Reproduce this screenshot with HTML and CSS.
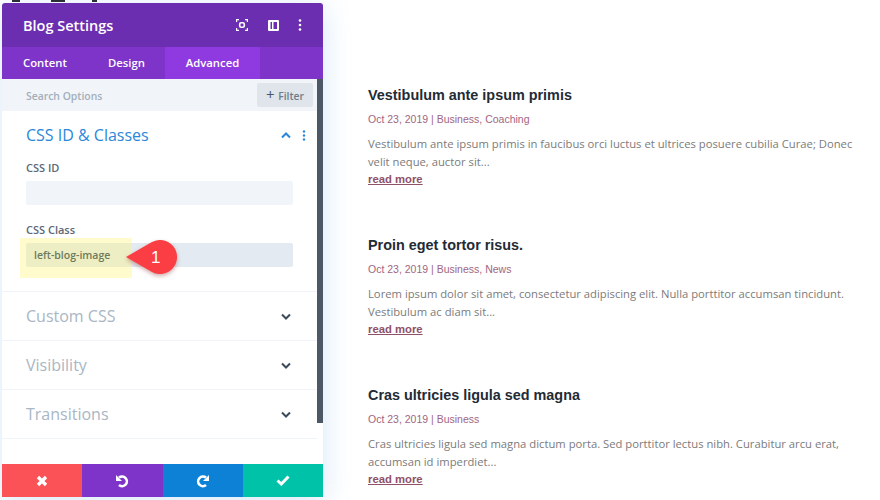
FILE: index.html
```html
<!DOCTYPE html>
<html lang="en">
<head>
    <meta charset="UTF-8">
    <title>Blog Settings</title>
    <link rel="stylesheet" href="styles.css">
</head>
<body>
    <div class="page">
        <!-- settings modal -->
        <div class="panel-col">
            <!-- bottom of the page heading, hidden by the modal -->
            <div class="heading-peek">
                <span class="peek-a"></span>
                <span class="peek-b"></span>
                <span class="peek-c"></span>
            </div>
            <div class="panel">
                <div class="panel-head">
                    <span class="panel-title">Blog Settings</span>
                    <div class="head-icons">
                        <svg width="12" height="12" viewBox="0 0 12 12" fill="none" stroke="#fff" stroke-width="1.2"><path d="M.6 3V.6H3M9 .6h2.400V3M11.400 9v2.400H9M3 11.400H.6V9"/><rect x="3.700" y="3.700" width="4.600" height="4.600" rx="1.500" stroke-width="1.600"/></svg>
                        <svg width="11" height="11" viewBox="0 0 11 11"><path fill="#fff" fill-rule="evenodd" d="M1 0h9a1 1 0 0 1 1 1v9a1 1 0 0 1-1 1H1a1 1 0 0 1-1-1V1a1 1 0 0 1 1-1zm1.500 2v7H4V2zm3 0v7h3.500V2z"/></svg>
                        <svg width="4" height="12" viewBox="0 0 4 12" fill="#fff"><circle cx="2" cy="1.500" r="1.300"/><circle cx="2" cy="6" r="1.300"/><circle cx="2" cy="10.500" r="1.300"/></svg>
                    </div>
                </div>
                <div class="tabs">
                    <span class="tab tab-content">Content</span>
                    <span class="tab tab-design">Design</span>
                    <span class="tab tab-advanced">Advanced</span>
                </div>
                <div class="panel-body">
                    <div class="scrollbar"></div>
                    <div class="search-row">
                        <span class="search-text">Search Options</span>
                        <span class="filter-btn"><span class="plus">+</span> Filter</span>
                    </div>
                    <div class="section section-open">
                        <div class="section-head">
                            <span class="section-title blue">CSS ID &amp; Classes</span>
                            <div class="section-icons">
                                <svg width="10" height="7" viewBox="0 0 10 7" fill="none" stroke="#2b87da" stroke-width="2"><path d="M1 5.500l4-4 4 4"/></svg>
                                <svg width="4" height="11" viewBox="0 0 4 11" fill="#2b87da"><circle cx="2" cy="1.500" r="1.200"/><circle cx="2" cy="5.500" r="1.200"/><circle cx="2" cy="9.500" r="1.200"/></svg>
                            </div>
                        </div>
                        <label class="field-label first">CSS ID</label>
                        <div class="field"></div>
                        <label class="field-label second">CSS Class</label>
                        <div class="field field-filled">
                            <span class="highlight"></span>
                            <span class="field-value">left-blog-image</span>
                            <svg class="callout" width="56" height="44" viewBox="0 0 56 44">
                                <path fill="#fb3e44" d="M2 21L27.500 6.300A17 17 0 1 1 27.500 35.700z"/>
                            </svg>
                            <span class="callout-num">1</span>
                        </div>
                    </div>
                    <div class="section">
                        <span class="section-title">Custom CSS</span>
                        <svg class="chevron" width="10" height="7" viewBox="0 0 10 7" fill="none" stroke="#3d4a5c" stroke-width="2"><path d="M1 1.500l4 4 4-4"/></svg>
                    </div>
                    <div class="section">
                        <span class="section-title">Visibility</span>
                        <svg class="chevron" width="10" height="7" viewBox="0 0 10 7" fill="none" stroke="#3d4a5c" stroke-width="2"><path d="M1 1.500l4 4 4-4"/></svg>
                    </div>
                    <div class="section">
                        <span class="section-title">Transitions</span>
                        <svg class="chevron" width="10" height="7" viewBox="0 0 10 7" fill="none" stroke="#3d4a5c" stroke-width="2"><path d="M1 1.500l4 4 4-4"/></svg>
                    </div>
                </div>
                <div class="actions">
                    <div class="action red">
                        <svg width="12" height="12" viewBox="0 0 12 12" fill="none" stroke="#fff" stroke-width="3.400"><path d="M2 2l8 8M10 2l-8 8"/></svg>
                    </div>
                    <div class="action purple">
                        <svg width="14" height="14" viewBox="0 0 14 14" fill="none" stroke="#fff" stroke-width="2.600"><path d="M4 3.600A4.800 4.800 0 1 1 4 11"/><path fill="#fff" stroke="none" d="M1 1v6h6z"/></svg>
                    </div>
                    <div class="action blue-bg">
                        <svg width="14" height="14" viewBox="0 0 14 14" fill="none" stroke="#fff" stroke-width="2.600"><path d="M10 3.600A4.800 4.800 0 1 0 10 11"/><path fill="#fff" stroke="none" d="M13 1v6H7z"/></svg>
                    </div>
                    <div class="action green">
                        <svg width="14" height="11" viewBox="0 0 14 11" fill="none" stroke="#fff" stroke-width="3"><path d="M1.500 5.500l3.800 3.500 7.200-7.500"/></svg>
                    </div>
                </div>
            </div>
        </div>

        <!-- blog list -->
        <div class="posts">
            <div class="post">
                <h2 class="post-title">Vestibulum ante ipsum primis</h2>
                <div class="post-meta">Oct 23, 2019 | Business, Coaching</div>
                <p class="post-text">Vestibulum ante ipsum primis in faucibus orci luctus et ultrices posuere cubilia Curae; Donec velit neque, auctor sit...</p>
                <a class="read-more" href="#">read more</a>
            </div>
            <div class="post">
                <h2 class="post-title">Proin eget tortor risus.</h2>
                <div class="post-meta">Oct 23, 2019 | Business, News</div>
                <p class="post-text">Lorem ipsum dolor sit amet, consectetur adipiscing elit. Nulla porttitor accumsan tincidunt. Vestibulum ac diam sit...</p>
                <a class="read-more" href="#">read more</a>
            </div>
            <div class="post">
                <h2 class="post-title">Cras ultricies ligula sed magna</h2>
                <div class="post-meta">Oct 23, 2019 | Business</div>
                <p class="post-text">Cras ultricies ligula sed magna dictum porta. Sed porttitor lectus nibh. Curabitur arcu erat, accumsan id imperdiet...</p>
                <a class="read-more" href="#">read more</a>
            </div>
        </div>
    </div>
</body>
</html>
```

FILE: styles.css
```css
html, body {
    margin: 0;
    height: 100%;
    overflow: hidden;
    background-color: #fff;
}

.page {
    display: flex;
    height: 500px;
    font-family: "Open Sans", sans-serif;
}

.panel-col {
    width: 321px;
    margin-left: 2px;
    flex-shrink: 0;
}

.heading-peek {
    display: flex;
    height: 3px;
}

.heading-peek span {
    height: 2px;
    background-color: #2a2f38;
}

.peek-a {
    width: 8px;
    margin-left: 10px;
}

.peek-b {
    width: 14px;
    margin-left: 31px;
}

.peek-c {
    width: 5px;
    margin-left: 27px;
}

.panel {
    display: flex;
    flex-direction: column;
    height: 494px;
    background-color: #fff;
    border-radius: 3px;
    box-shadow: 0 5px 30px rgba(43, 135, 218, 0.2);
}

.panel-head {
    display: flex;
    align-items: center;
    justify-content: space-between;
    height: 44px;
    padding: 0 21px;
    background-color: #6c2eb1;
    border-radius: 3px 3px 0 0;
}

.panel-title {
    font-size: 14.500px;
    font-weight: 600;
    color: #fff;
}

.head-icons {
    display: flex;
    align-items: center;
    gap: 19px;
}

.head-icons svg:first-child {
    margin-right: 1px;
}

.tabs {
    display: flex;
    height: 32px;
    background-color: #7e34c9;
}

.tab {
    font-size: 11.300px;
    font-weight: 600;
    line-height: 32px;
    color: #fff;
}

.tab-content {
    width: 87px;
    padding-left: 21px;
    box-sizing: border-box;
}

.tab-design {
    width: 76px;
    padding-left: 19px;
    box-sizing: border-box;
}

.tab-advanced {
    width: 95px;
    text-align: center;
    background-color: #8f3ae0;
}

.panel-body {
    position: relative;
    flex: 1;
    padding-right: 6px;
}

.scrollbar {
    position: absolute;
    top: 0;
    right: 0;
    width: 6px;
    height: 344px;
    background-color: #4c5866;
}

.search-row {
    display: flex;
    align-items: center;
    justify-content: space-between;
    height: 32px;
    padding: 0 4px 0 24px;
    background-color: #f1f5f9;
}

.search-text {
    padding-top: 2px;
    font-size: 10.400px;
    font-weight: 600;
    color: #a3aebb;
}

.filter-btn {
    width: 56px;
    height: 24px;
    font-size: 10.400px;
    font-weight: 600;
    line-height: 26px;
    text-align: center;
    color: #6f7b89;
    background-color: #dfe5ea;
    border-radius: 2px;
}

.plus {
    margin-right: 1px;
    font-size: 15px;
    font-weight: 400;
    line-height: 14px;
    color: #4c5866;
}

.section {
    display: flex;
    align-items: center;
    justify-content: space-between;
    height: 48px;
    padding: 0 26px 0 24px;
    border-bottom: 1px solid #f1f5f9;
}

.section-open {
    display: block;
    height: 180px;
    padding: 0;
}

.section-head {
    display: flex;
    align-items: center;
    justify-content: space-between;
    height: 48px;
    padding: 0 11px 0 24px;
}

.section-icons {
    display: flex;
    align-items: center;
    gap: 11px;
}

.section-title {
    font-size: 16px;
    color: #a9b6c4;
}

.blue {
    color: #2b87da;
}

.field-label {
    display: block;
    padding-left: 24px;
    font-size: 11px;
    font-weight: 600;
    line-height: 16px;
    color: #5c6775;
}

.first {
    margin-top: 1px;
}

.second {
    margin-top: 17px;
}

.field {
    position: relative;
    height: 24px;
    margin: 5px 24px 0;
    background-color: #f1f5f9;
    border-radius: 2px;
}

.field-filled {
    background-color: #e3eaf1;
}

.field-value {
    position: absolute;
    left: 8px;
    top: 0;
    font-size: 10.500px;
    font-weight: 600;
    line-height: 24px;
    color: #6d7a5c;
}

.highlight {
    position: absolute;
    left: -6px;
    top: -5px;
    width: 112px;
    height: 40px;
    background-color: rgba(255, 246, 130, 0.4);
}

.callout {
    position: absolute;
    left: 98px;
    top: -7px;
    filter: drop-shadow(0 2px 2px rgba(120, 20, 20, 0.35));
}

.callout-num {
    position: absolute;
    left: 125px;
    top: 3px;
    font-family: "Liberation Sans", sans-serif;
    font-size: 17px;
    line-height: 24px;
    color: #fff;
}

.actions {
    display: flex;
    height: 33px;
}

.action {
    display: flex;
    align-items: center;
    justify-content: center;
    flex: 1;
}

.red {
    background-color: #fb5257;
}

.purple {
    background-color: #7e34c9;
}

.blue-bg {
    background-color: #0c81d6;
}

.green {
    background-color: #00c2a8;
}

/* blog list */
.posts {
    flex: 1;
    padding: 83px 20px 0 45px;
}

.post {
    height: 150px;
}

.post:last-child {
    height: auto;
}

.post-title {
    margin: 0;
    font-family: "Liberation Sans", sans-serif;
    font-size: 14.400px;
    font-weight: bold;
    line-height: 24px;
    color: #232b35;
}

.post-meta {
    margin-top: 4px;
    font-family: "Liberation Sans", sans-serif;
    font-size: 10.500px;
    line-height: 16px;
    color: #a1667f;
}

.post-text {
    margin: 8px 0 0;
    font-size: 11.250px;
    line-height: 18px;
    color: #7b7b7b;
}

.read-more {
    display: block;
    font-family: "Liberation Sans", sans-serif;
    font-size: 11.300px;
    font-weight: bold;
    line-height: 17px;
    color: #8f5069;
}
```
